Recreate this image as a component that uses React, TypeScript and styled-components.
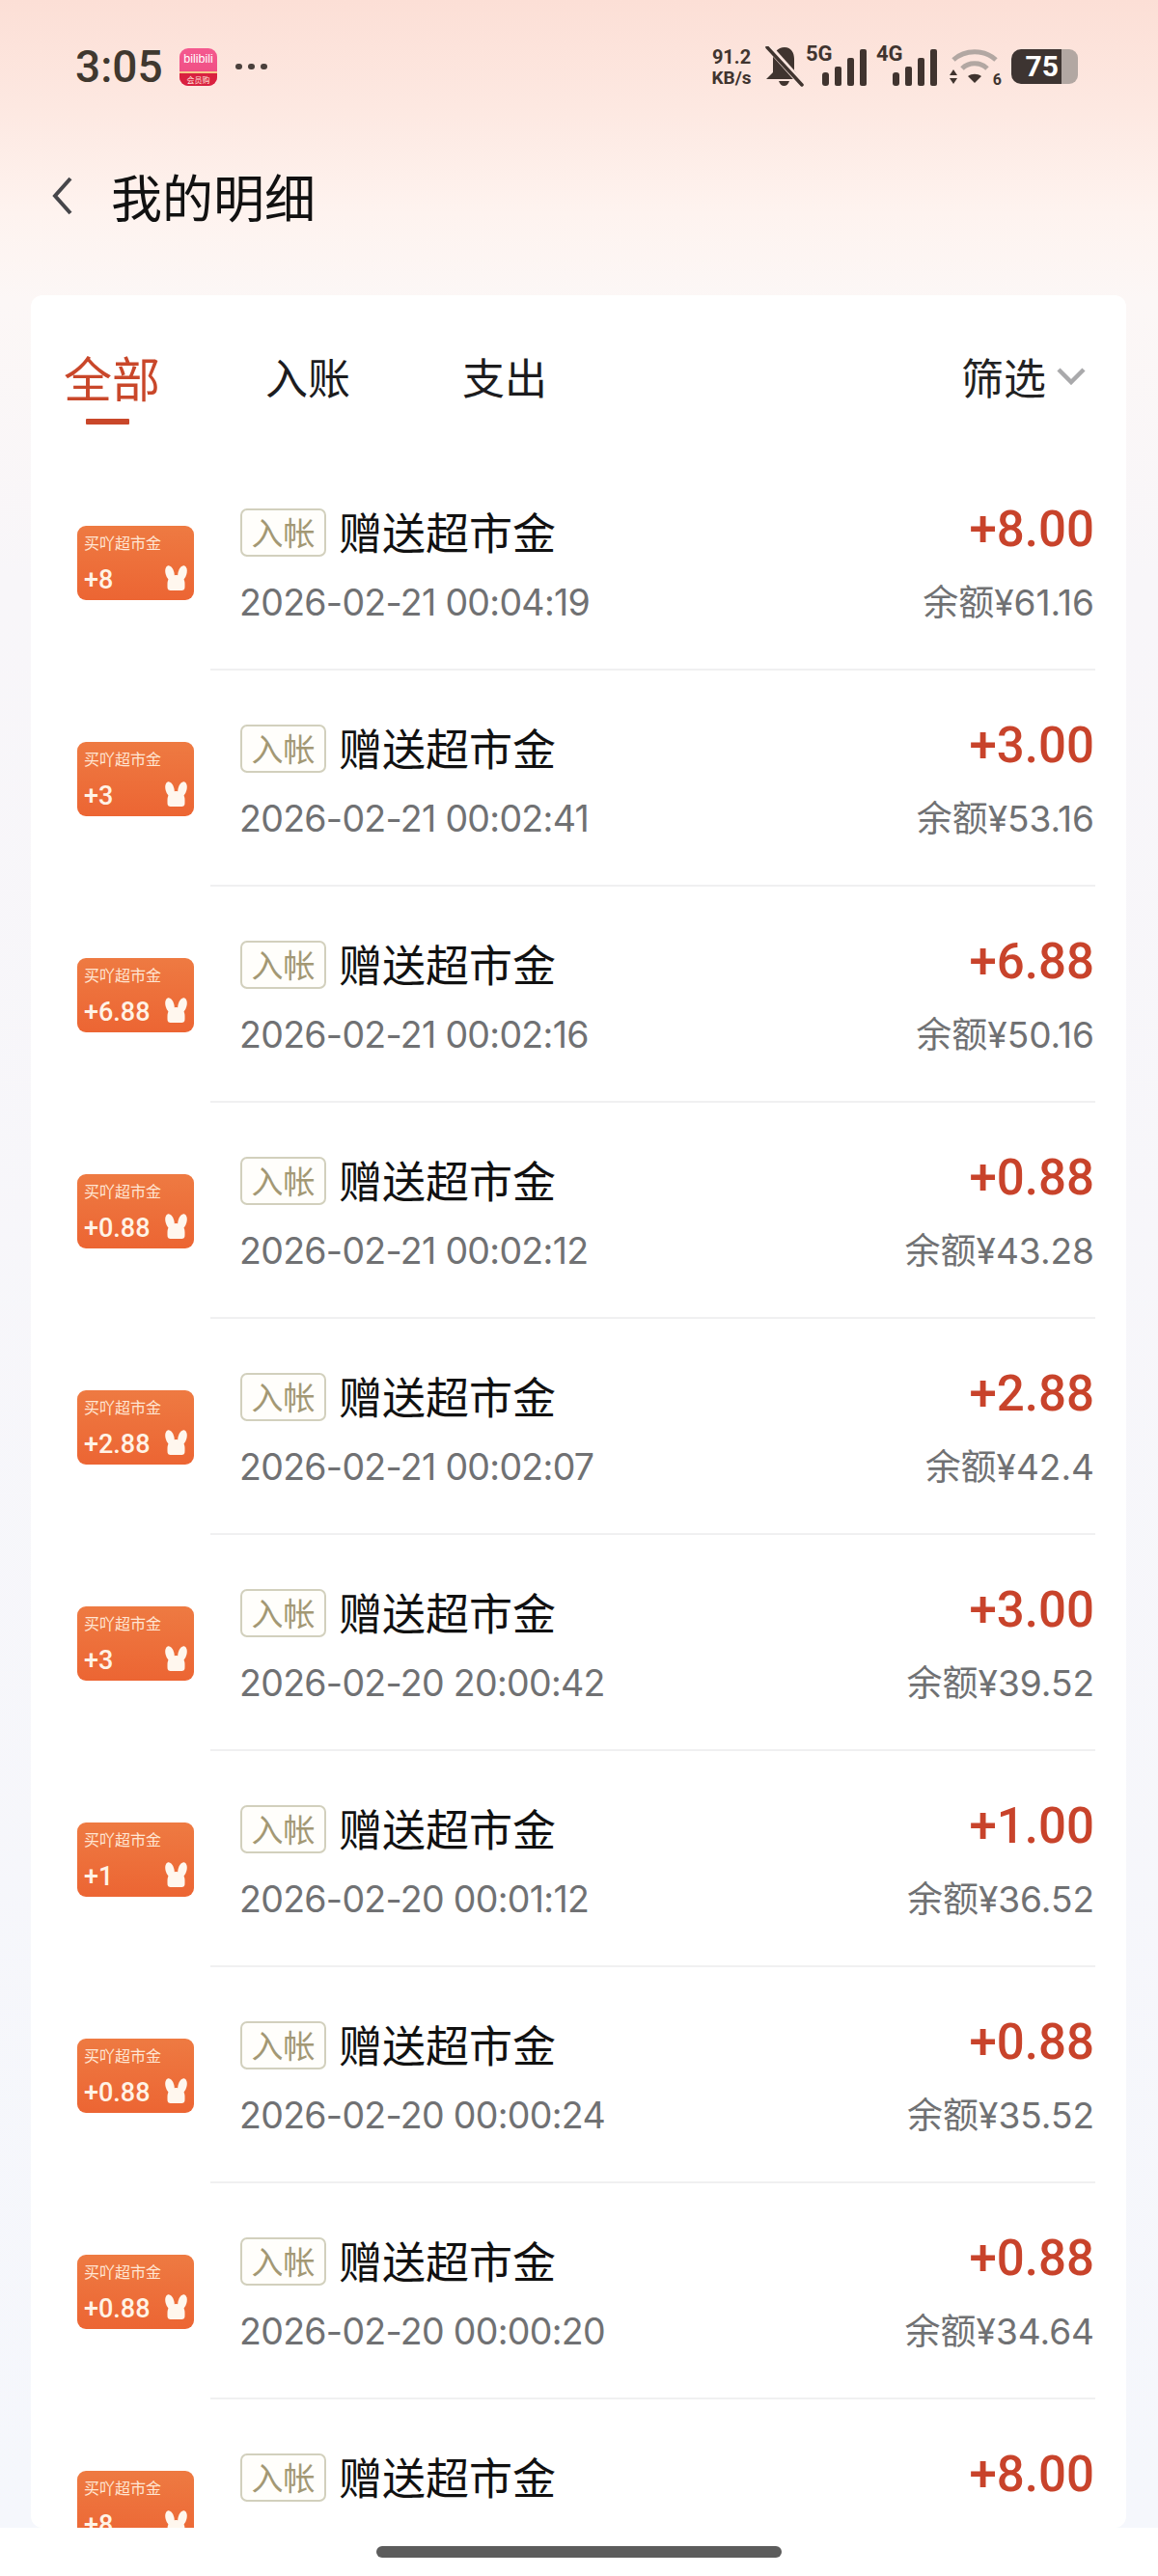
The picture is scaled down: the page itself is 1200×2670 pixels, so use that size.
import React from 'react'
import styled, { createGlobalStyle } from 'styled-components'

type Entry = { bonus: string; amount: string; time?: string; balance?: string }

const entries: Array<Entry> = [
  { bonus: '+8', amount: '+8.00', time: '2026-02-21 00:04:19', balance: '61.16' },
  { bonus: '+3', amount: '+3.00', time: '2026-02-21 00:02:41', balance: '53.16' },
  { bonus: '+6.88', amount: '+6.88', time: '2026-02-21 00:02:16', balance: '50.16' },
  { bonus: '+0.88', amount: '+0.88', time: '2026-02-21 00:02:12', balance: '43.28' },
  { bonus: '+2.88', amount: '+2.88', time: '2026-02-21 00:02:07', balance: '42.4' },
  { bonus: '+3', amount: '+3.00', time: '2026-02-20 20:00:42', balance: '39.52' },
  { bonus: '+1', amount: '+1.00', time: '2026-02-20 00:01:12', balance: '36.52' },
  { bonus: '+0.88', amount: '+0.88', time: '2026-02-20 00:00:24', balance: '35.52' },
  { bonus: '+0.88', amount: '+0.88', time: '2026-02-20 00:00:20', balance: '34.64' },
  // the last row is cut by the bottom of the card
  { bonus: '+8', amount: '+8.00' },
]

const BellOff = () => (
  <svg width="40" height="42" viewBox="0 0 40 42">
    <path
      fill="#40342f"
      d="M20 1c7 0 10 6 10 12v12l7 9H1l7-7V13C8 7 13 1 20 1zM14 36h11c-1 3-3 5-5.500 5S15 39 14 36z"
    />
    <path d="M3 0L38 39" stroke="#fbe6df" strokeWidth="7" />
    <path d="M2 1L38 40" stroke="#40342f" strokeWidth="3.500" strokeLinecap="round" />
  </svg>
)

const SignalBars = () => (
  <svg width="46" height="38" viewBox="0 0 46 38">
    <g fill="#40342f">
      <rect x="0" y="24" width="7" height="14" rx="3" />
      <rect x="13" y="18" width="7" height="20" rx="2" />
      <rect x="26" y="9" width="7" height="29" rx="2" />
      <rect x="39" y="0" width="7" height="38" rx="2" />
    </g>
  </svg>
)

const WifiIcon = () => (
  <svg width="52" height="38" viewBox="0 0 52 38">
    <g fill="none" stroke="#b2a7a2" strokeWidth="5">
      <path d="M4 12C16 1 36 1 48 12" />
      <path d="M13 21C20 14 32 14 39 21" />
    </g>
    <path fill="#40342f" d="M19 29c4-3 10-3 14 0l-7 7z" />
    <path fill="#40342f" d="M4 22l4 6H0zM4 37l-4-6h8z" />
  </svg>
)

const BunnyIcon = () => (
  <svg width="23" height="26" viewBox="0 0 23 26">
    <g fill="#fff7ee">
      <ellipse cx="5" cy="8" rx="4.500" ry="8" transform="rotate(-14 5 8)" />
      <ellipse cx="18" cy="8" rx="4.500" ry="8" transform="rotate(14 18 8)" />
      <path d="M11.500 10c6 0 9 4 9 9v3c0 3-1 4-4 4H6.500c-3 0-4-1-4-4v-3c0-5 3-9 9-9z" />
    </g>
  </svg>
)

const App: React.FC = () => (
  <Page>
    <GlobalStyle />
    <Scroller>
      <StatusBar>
        <StatusLeft>
          <Clock>3:05</Clock>
          <AppIcon>
            <AppIconName>bilibili</AppIconName>
            <AppIconBand>会员购</AppIconBand>
          </AppIcon>
          <Dots>
            <i />
            <i />
            <i />
          </Dots>
        </StatusLeft>
        <StatusRight>
          <Speed>
            <span>91.2</span>
            <span>KB/s</span>
          </Speed>
          <BellOff />
          <Network $first>
            <NetworkLabel>5G</NetworkLabel>
            <SignalBars />
          </Network>
          <Network>
            <NetworkLabel>4G</NetworkLabel>
            <SignalBars />
          </Network>
          <Wifi>
            <WifiIcon />
            <WifiBand>6</WifiBand>
          </Wifi>
          <Battery>
            <BatteryLevel>75</BatteryLevel>
            <BatteryRest />
          </Battery>
        </StatusRight>
      </StatusBar>

      <NavBar>
        <svg width="22" height="40" viewBox="0 0 22 40">
          <path d="M19 2L3 20l16 18" fill="none" stroke="#46464a" strokeWidth="4" />
        </svg>
        <NavTitle>我的明细</NavTitle>
      </NavBar>

      <Card>
        <Tabs>
          <Tab $active>全部</Tab>
          <Tab>入账</Tab>
          <Tab>支出</Tab>
          <Filter>
            筛选
            <svg width="30" height="18" viewBox="0 0 30 18">
              <path d="M2 2l13 13L28 2" fill="none" stroke="#a9a9ab" strokeWidth="4.500" />
            </svg>
          </Filter>
        </Tabs>
        {entries.map((entry, i) => (
          <Row key={i}>
            <Coupon>
              <CouponName>买吖超市金</CouponName>
              <CouponFoot>
                <CouponValue>{entry.bonus}</CouponValue>
                <BunnyIcon />
              </CouponFoot>
            </Coupon>
            <RowBody>
              <Line>
                <TitleGroup>
                  <Tag>入帐</Tag>
                  <Title>赠送超市金</Title>
                </TitleGroup>
                <Amount>{entry.amount}</Amount>
              </Line>
              {entry.time && (
                <Line>
                  <Time>{entry.time}</Time>
                  <Balance>余额¥{entry.balance}</Balance>
                </Line>
              )}
            </RowBody>
          </Row>
        ))}
      </Card>
    </Scroller>
    <HomeArea>
      <HomeBar />
    </HomeArea>
  </Page>
)

export default App

const GlobalStyle = createGlobalStyle`
  html, body {
    margin: 0;
    padding: 0;
    background: #fff;
  }
  * {
    box-sizing: border-box;
  }
`

const Page = styled.div`
  width: 1200px;
  height: 2670px;
  display: flex;
  flex-direction: column;
  overflow: hidden;
  font-family: 'Noto Sans CJK SC', 'Noto Sans', sans-serif;
`
const Scroller = styled.div`
  flex: 1;
  min-height: 0;
  overflow: hidden;
  display: flex;
  flex-direction: column;
  background: linear-gradient(
    180deg,
    #fcdfd6 0,
    #fde8e1 110px,
    #fef3ef 220px,
    #fcf7f6 310px,
    #f8f6f9 600px,
    #f5f7fc 2620px
  );
`
const StatusBar = styled.div`
  height: 140px;
  flex-shrink: 0;
  display: flex;
  justify-content: space-between;
  align-items: flex-start;
  padding: 48px 83px 0 78px;
`
const StatusLeft = styled.div`
  display: flex;
  align-items: center;
  height: 42px;
`
const Clock = styled.span`
  font: 500 46px/42px Roboto, sans-serif;
  color: #40382f;
  width: 108px;
`
const AppIcon = styled.div`
  width: 39px;
  height: 39px;
  border-radius: 9px;
  overflow: hidden;
  display: flex;
  flex-direction: column;
  justify-content: flex-end;
  background: linear-gradient(180deg, #f4598f, #ee4a80);
`
const AppIconName = styled.span`
  flex: 1;
  text-align: center;
  font: 400 12.500px/22px 'Liberation Sans', sans-serif;
  color: #fff;
`
const AppIconBand = styled.span`
  height: 15px;
  background: #d9213f;
  border-top: 2px solid #f7c98a;
  text-align: center;
  font-size: 8px;
  line-height: 13px;
  color: #ffe3de;
`
const Dots = styled.div`
  display: flex;
  gap: 6.500px;
  margin-left: 19px;
  i {
    width: 6.500px;
    height: 6.500px;
    border-radius: 50%;
    background: #4a403c;
  }
`
const StatusRight = styled.div`
  display: flex;
  align-items: center;
  height: 42px;
  color: #40342f;
`
const Speed = styled.div`
  width: 50px;
  margin-right: 10px;
  display: flex;
  flex-direction: column;
  align-items: center;
  font: 700 20px/24px Roboto, sans-serif;
  span + span {
    font-size: 19px;
    line-height: 20px;
  }
`
const Network = styled.div<{ $first?: boolean }>`
  width: 70px;
  height: 40px;
  margin-left: ${(p) => (p.$first ? '-5px' : '8px')};
  margin-right: -5px;
  display: flex;
  justify-content: flex-end;
  align-items: flex-end;
  position: relative;
`
const NetworkLabel = styled.span`
  position: absolute;
  left: 7px;
  top: -4px;
  font: 700 22px/22px Roboto, sans-serif;
`
const Wifi = styled.div`
  margin-left: 18px;
  width: 52px;
  height: 38px;
  position: relative;
`
const WifiBand = styled.span`
  position: absolute;
  right: -2px;
  bottom: -4px;
  font: 700 16px/18px Roboto, sans-serif;
`
const Battery = styled.div`
  margin-left: 12px;
  width: 69px;
  height: 36px;
  display: flex;
`
const BatteryLevel = styled.span`
  width: 52px;
  background: #3d3431;
  border-radius: 10px 0 0 10px;
  color: #fff;
  text-align: right;
  padding-right: 3px;
  font: 700 30px/36px Roboto, sans-serif;
`
const BatteryRest = styled.span`
  width: 17px;
  background: #b2a7a2;
  border-radius: 0 9px 9px 0;
`
const NavBar = styled.div`
  height: 166px;
  flex-shrink: 0;
  padding: 43px 0 0 54px;
  display: flex;
  align-items: flex-start;
  gap: 39px;
`
const NavTitle = styled.span`
  font-size: 53px;
  line-height: 40px;
  color: #111;
`
const Card = styled.div`
  flex: 1;
  min-height: 0;
  overflow: hidden;
  margin: 0 33px 0 32px;
  background: #fff;
  border-radius: 12px;
`
const Tabs = styled.div`
  height: 165px;
  display: flex;
  align-items: flex-start;
  padding: 54px 42px 0 34px;
`
const Tab = styled.div<{ $active?: boolean }>`
  position: relative;
  width: ${(p) => (p.$active ? '209px' : '204px')};
  line-height: 60px;
  font-size: ${(p) => (p.$active ? '50px' : '44px')};
  color: ${(p) => (p.$active ? '#c9472a' : '#1c1c1e')};
  &::after {
    content: '';
    display: ${(p) => (p.$active ? 'block' : 'none')};
    position: absolute;
    left: 23px;
    bottom: -20px;
    width: 45px;
    height: 6px;
    border-radius: 1px;
    background: #c9472a;
  }
`
const Filter = styled.div`
  margin-left: auto;
  display: flex;
  align-items: center;
  gap: 11px;
  font-size: 44px;
  line-height: 60px;
  color: #222;
`
const Row = styled.div`
  height: 224px;
  padding-left: 48px;
  padding-right: 32px;
  display: flex;
  align-items: center;
  flex-shrink: 0;
`
const Coupon = styled.div`
  width: 121px;
  height: 77px;
  flex-shrink: 0;
  border-radius: 9px;
  padding: 6px 7px 0 7px;
  background: linear-gradient(180deg, #ee7a42, #ec6533);
  color: #fff3e6;
  display: flex;
  flex-direction: column;
  justify-content: space-between;
  margin-top: 1px;
`
const CouponName = styled.span`
  font-size: 16px;
  line-height: 22px;
  white-space: nowrap;
  color: #ffe6d4;
`
const CouponFoot = styled.div`
  display: flex;
  align-items: flex-end;
  justify-content: space-between;
  padding-bottom: 7px;
  svg {
    margin-bottom: 3px;
  }
`
const CouponValue = styled.span`
  font: 500 27px/28px Roboto, sans-serif;
`
const RowBody = styled.div`
  flex: 1;
  align-self: stretch;
  margin-left: 17px;
  padding: 56px 1px 0 31px;
  border-bottom: 2px solid #f0f0f1;
  display: flex;
  flex-direction: column;
  gap: 22px;
`
const Line = styled.div`
  display: flex;
  align-items: center;
  justify-content: space-between;
  height: 50px;
`
const TitleGroup = styled.div`
  display: flex;
  align-items: center;
  gap: 13px;
`
const Tag = styled.span`
  width: 89px;
  height: 50px;
  border: 2px solid #d2d0bd;
  border-radius: 7px;
  background: #fffefb;
  text-align: center;
  font-size: 33px;
  line-height: 44px;
  color: #a39874;
`
const Title = styled.span`
  font-size: 45px;
  line-height: 46px;
  padding-bottom: 2px;
  color: #111;
`
const Amount = styled.span`
  font: 500 51px/46px Roboto, sans-serif;
  margin-bottom: 6px;
  color: #c8432b;
`
const Time = styled.span`
  font: 400 37.500px/50px Inter, sans-serif;
  letter-spacing: -0.700px;
  margin: 1px 0 0 -1px;
  color: #707173;
`
const Balance = styled.span`
  font: 400 37px/50px Inter, 'Noto Sans CJK SC', sans-serif;
  margin-top: 1px;
  color: #707173;
`
const HomeArea = styled.div`
  height: 50px;
  flex-shrink: 0;
  background: #fff;
  display: flex;
  justify-content: center;
  padding-top: 19px;
`
const HomeBar = styled.div`
  width: 420px;
  height: 12px;
  border-radius: 6px;
  background: #5c5c5c;
`
